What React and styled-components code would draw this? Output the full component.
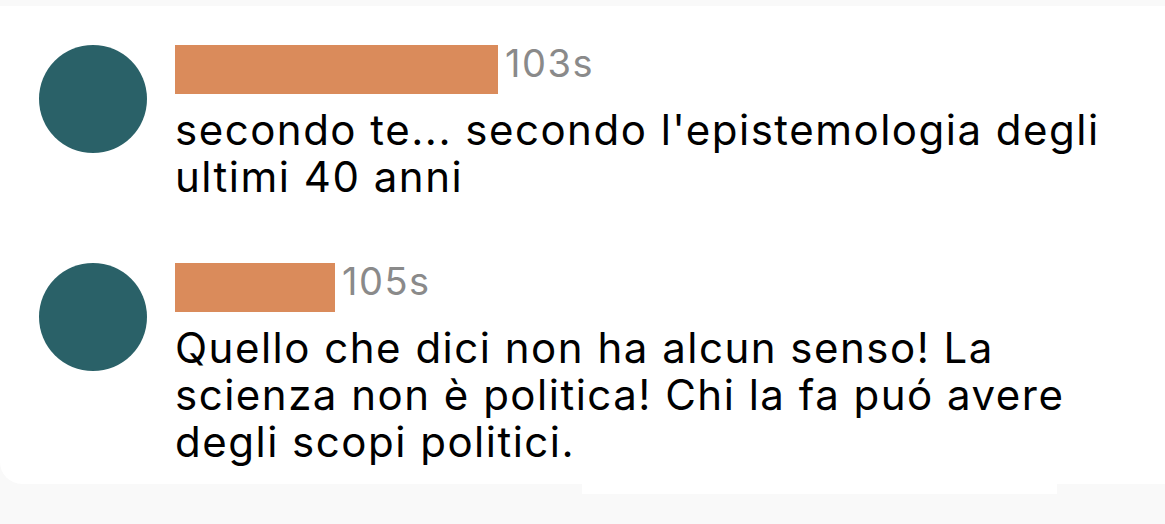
import React from 'react'
import styled, { createGlobalStyle } from 'styled-components'

const GlobalStyle = createGlobalStyle`
  html, body {
    margin: 0;
    padding: 0;
    background: #f9f9f9;
  }
  body {
    font-family: Inter, "Liberation Sans", Arial, sans-serif;
  }
`

const Page = styled.div`
  width: 1165px;
  height: 524px;
  padding-top: 6px;
  box-sizing: border-box;
  background: #f9f9f9;
`

const Card = styled.div`
  background: #ffffff;
  border-radius: 0 0 0 22px;
  padding: 39px 0 0 39px;
  height: 478px;
  box-sizing: border-box;
  display: flex;
  flex-direction: column;
  gap: 63px;
`

// leftover white strip hanging under the card
const Patch = styled.div`
  margin-left: 582px;
  width: 475px;
  height: 10px;
  background: #ffffff;
`

const CommentRow = styled.div`
  display: flex;
  align-items: flex-start;
  gap: 28px;
`

const Avatar = styled.div`
  width: 108px;
  height: 108px;
  border-radius: 50%;
  background: #2a6168;
  flex-shrink: 0;
`

const Content = styled.div`
  display: flex;
  flex-direction: column;
`

const Header = styled.div`
  display: flex;
  align-items: flex-start;
  gap: 7px;
  height: 49px;
`

const NameBar = styled.div`
  width: ${p => p.width}px;
  height: 49px;
  background: #da8b5b;
`

const Time = styled.span`
  font-size: 38px;
  line-height: 36px;
  letter-spacing: 1.5px;
  color: #8a8a8a;
`

const Body = styled.p`
  margin: 12px 0 0;
  font-size: 42px;
  line-height: 47px;
  letter-spacing: 1.5px;
  color: #000000;
  width: 980px;
`

const comments = [
  {
    nameWidth: 323,
    time: '103s',
    lines: ["secondo te... secondo l'epistemologia degli", 'ultimi 40 anni'],
  },
  {
    nameWidth: 160,
    time: '105s',
    lines: [
      'Quello che dici non ha alcun senso! La',
      'scienza non è politica! Chi la fa puó avere',
      'degli scopi politici.',
    ],
  },
]

const Comment = ({ nameWidth, time, lines }) => (
  <CommentRow>
    <Avatar />
    <Content>
      <Header>
        <NameBar width={nameWidth} />
        <Time>{time}</Time>
      </Header>
      <Body>
        {lines.map((l, i) => (
          <React.Fragment key={i}>
            {l}
            {i < lines.length - 1 && <br />}
          </React.Fragment>
        ))}
      </Body>
    </Content>
  </CommentRow>
)

export default function App() {
  return (
    <>
      <GlobalStyle />
      <Page>
        <Card>
          {comments.map((c, i) => (
            <Comment key={i} {...c} />
          ))}
        </Card>
        <Patch />
      </Page>
    </>
  )
}
